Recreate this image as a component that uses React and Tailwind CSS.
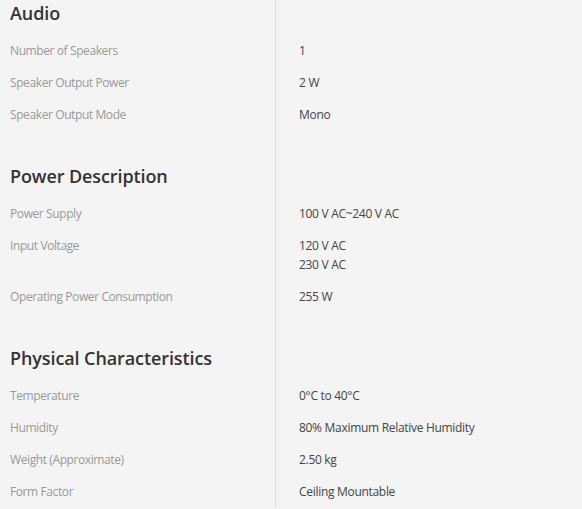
import React from 'react';

const SECTIONS = [
  {
    title: 'Audio',
    rows: [
      { label: 'Number of Speakers', value: ['1'] },
      { label: 'Speaker Output Power', value: ['2 W'] },
      { label: 'Speaker Output Mode', value: ['Mono'] },
    ],
  },
  {
    title: 'Power Description',
    rows: [
      { label: 'Power Supply', value: ['100 V AC~240 V AC'] },
      { label: 'Input Voltage', value: ['120 V AC', '230 V AC'] },
      { label: 'Operating Power Consumption', value: ['255 W'] },
    ],
  },
  {
    title: 'Physical Characteristics',
    rows: [
      { label: 'Temperature', value: ['0°C to 40°C'] },
      { label: 'Humidity', value: ['80% Maximum Relative Humidity'] },
      { label: 'Weight (Approximate)', value: ['2.50 kg'] },
      { label: 'Form Factor', value: ['Ceiling Mountable'] },
    ],
  },
];

const SpecSection = ({ section }) => (
  <div className="mb-[33px]">
    <div className="flex">
      <h2 className="w-[275px] h-[34px] pl-[10px] text-[18px] leading-[26px] font-semibold text-[#333] tracking-[-0.1px]">
        {section.title}
      </h2>
      <div className="flex-1" />
    </div>
    {section.rows.map((row) => (
      <div key={row.label} className="flex">
        <div className="w-[275px] pl-[10px] pt-[7px] pb-[6px] text-[12px] leading-[19px] text-[#999] tracking-[-0.4px]">
          {row.label}
        </div>
        <div className="flex-1 pl-[24px] pt-[7px] pb-[6px] text-[12px] leading-[19px] text-[#444] tracking-[-0.3px]">
          {row.value.map((v) => (
            <div key={v}>{v}</div>
          ))}
        </div>
      </div>
    ))}
  </div>
);

export default function App() {
  return (
    <div className="w-[582px] h-[509px] overflow-hidden bg-[#f4f4f4] font-['Open_Sans',sans-serif]">
      <div className="relative">
        <div className="absolute top-0 bottom-0 left-[275px] w-px bg-[#dcdcdc]" />
        {SECTIONS.map((s) => (
          <SpecSection key={s.title} section={s} />
        ))}
      </div>
    </div>
  );
}
